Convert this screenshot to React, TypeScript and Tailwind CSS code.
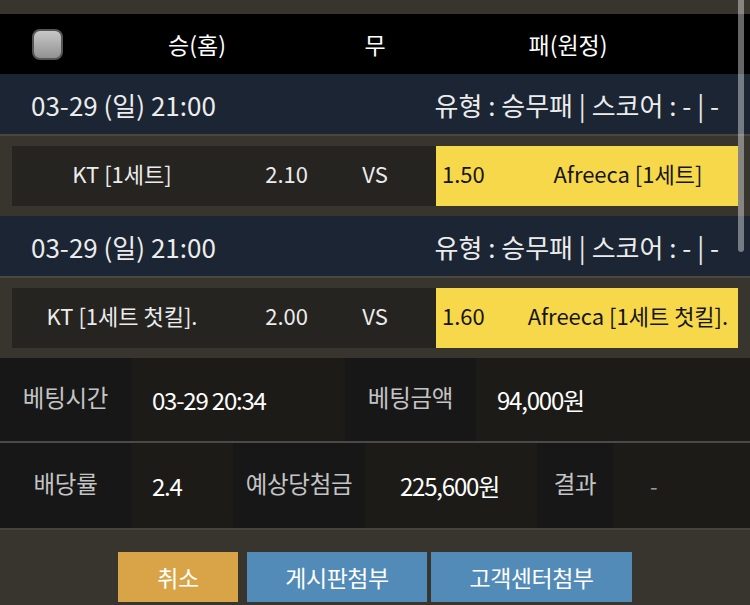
import React from "react";

const font = { fontFamily: '"Noto Sans CJK KR", "Noto Sans", sans-serif' };

type Match = {
  date: string;
  home: string;
  homeOdds: string;
  awayOdds: string;
  away: string;
};

const matches: Match[] = [
  { date: "03-29 (일) 21:00", home: "KT [1세트]", homeOdds: "2.10", awayOdds: "1.50", away: "Afreeca [1세트]" },
  { date: "03-29 (일) 21:00", home: "KT [1세트 첫킬].", homeOdds: "2.00", awayOdds: "1.60", away: "Afreeca [1세트 첫킬]." },
];

function MatchBlock({ m }: { m: Match }) {
  return (
    <div>
      <div className="h-[60px] bg-[#1b2533] flex items-center justify-between px-[31px] text-[26px] text-[#ececec]">
        <span>{m.date}</span>
        <span>유형 : 승무패 | 스코어 : - | -</span>
      </div>
      <div className="h-[2px] bg-[#4a4741]" />
      <div className="bg-[#38342e] px-[12px] py-[10px]">
        <div className="flex h-[60px] bg-[#252420] text-[22px] text-[#ececec] whitespace-nowrap">
          <div className="w-[220px] flex items-center justify-center pb-[6px]">{m.home}</div>
          <div className="w-[82px] flex items-center justify-end pr-[6px] pb-[6px]">{m.homeOdds}</div>
          <div className="w-[122px] flex items-center justify-center pb-[6px]">VS</div>
          <div className="flex-1 flex bg-[#f8d84b] text-[#151515]">
            <div className="w-[82px] flex items-center pl-[6px] pb-[6px]">{m.awayOdds}</div>
            <div className="flex-1 flex items-center justify-center pb-[6px]">{m.away}</div>
          </div>
        </div>
      </div>
    </div>
  );
}

function Label({ w, children }: { w: string; children: React.ReactNode }) {
  return (
    <div className={`${w} bg-[#171717] flex items-center justify-center pb-[4px] text-[23.5px] tracking-[-0.3px] text-[#c4c4c4]`}>
      {children}
    </div>
  );
}

export default function App() {
  return (
    <div style={font} className="relative w-[750px] h-[605px] overflow-hidden bg-[#38342e]">
      <div className="h-[14px]" />

      {/* header */}
      <div className="h-[60px] bg-black flex items-center text-[23px] text-white">
        <div className="w-[95px] pl-[32px] flex items-center">
          <div className="w-[31px] h-[31px] rounded-[8px] border-2 border-[#555] bg-gradient-to-b from-[#c8c8c8] to-[#929292]" />
        </div>
        <div className="w-[204px] text-center">승(홈)</div>
        <div className="w-[152px] text-center">무</div>
        <div className="w-[234px] text-center">패(원정)</div>
      </div>

      {matches.map((m, i) => (
        <MatchBlock key={i} m={m} />
      ))}

      {/* bet info */}
      <div className="flex h-[83px] bg-[#1d1b18]">
        <Label w="w-[131px]">베팅시간</Label>
        <div className="w-[214px] flex items-center pl-[21px] text-[24px] text-white tracking-[-1.2px]">03-29 20:34</div>
        <Label w="w-[131px]">베팅금액</Label>
        <div className="flex-1 flex items-center pl-[21px] text-[24px] text-white tracking-[-1.2px]">94,000원</div>
      </div>
      <div className="h-[2px] bg-[#4a4946]" />
      <div className="flex h-[85px] bg-[#1d1b18]">
        <Label w="w-[131px]">배당률</Label>
        <div className="w-[102px] flex items-center pl-[21px] text-[24px] text-white tracking-[-1.2px]">2.4</div>
        <Label w="w-[132px]">예상당첨금</Label>
        <div className="w-[172px] flex items-center pl-[35px] text-[24px] text-white tracking-[-1.2px]">225,600원</div>
        <Label w="w-[76px]">결과</Label>
        <div className="flex-1 flex items-center pl-[37px] text-[22px] text-[#9a9a9a]">-</div>
      </div>
      <div className="h-[2px] bg-[#46433e]" />

      {/* buttons */}
      <div className="flex justify-center pt-[22px] text-[23px] text-white tracking-[-0.5px]">
        <button className="w-[120px] h-[50px] bg-[#d8a447] mr-[9px]">취소</button>
        <button className="w-[180px] h-[50px] bg-[#528bb8] mr-[4px]">게시판첨부</button>
        <button className="w-[201px] h-[50px] bg-[#528bb8]">고객센터첨부</button>
      </div>

      {/* scrollbar thumb */}
      <div className="absolute left-[738px] top-0 w-[6px] h-[252px] rounded-b-[3px] bg-white/40" />
    </div>
  );
}
